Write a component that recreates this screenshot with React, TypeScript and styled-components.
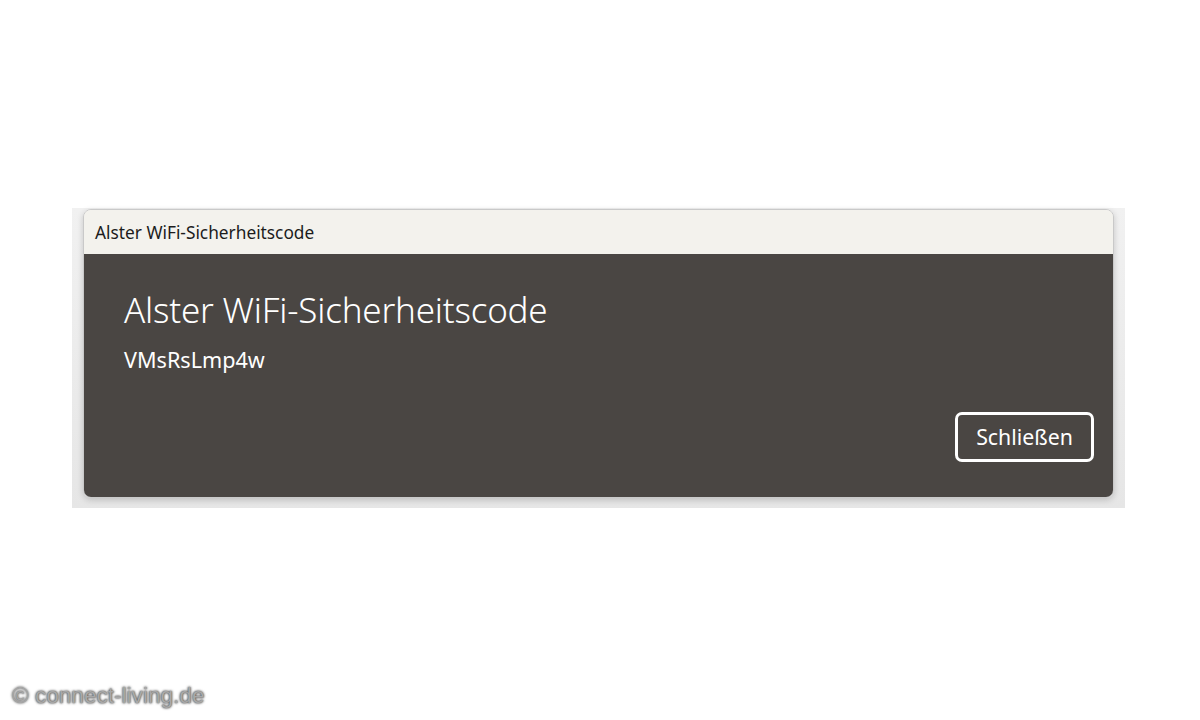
import styled, { createGlobalStyle } from 'styled-components';

const GlobalStyle = createGlobalStyle`
  html, body {
    margin: 0;
    padding: 0;
    background: #ffffff;
    font-family: 'Noto Sans', 'Open Sans', sans-serif;
  }
`;

const Page = styled.div`
  position: relative;
  width: 1200px;
  height: 720px;
  padding-top: 208px;
  padding-left: 72px;
  box-sizing: border-box;
`;

// grauer Rahmen um das Fenster (Screenshot-Schatten)
const Frame = styled.div`
  width: 1053px;
  height: 300px;
  box-sizing: border-box;
  padding: 1px 11px 10px 11px;
  background: linear-gradient(180deg, #f1f1f1 0%, #e6e6e6 100%);
`;

const Window = styled.div`
  height: 100%;
  display: flex;
  flex-direction: column;
  border-radius: 8px;
  overflow: hidden;
  border: 1px solid #c9c9c9;
  box-sizing: border-box;
  box-shadow: 0 2px 6px rgba(0, 0, 0, 0.18);
`;

const TitleBar = styled.div`
  height: 44px;
  flex-shrink: 0;
  display: flex;
  align-items: center;
  padding-left: 11px;
  background: #f3f2ed;
  color: #1c1c1c;
  font-size: 17.3px;
`;

const Body = styled.div`
  flex: 1;
  display: flex;
  flex-direction: column;
  padding: 34px 19px 35px 40px;
  background: #4a4643;
  color: #ffffff;
`;

const Heading = styled.div`
  font-size: 35px;
  font-weight: 300;
  line-height: 44px;
  letter-spacing: -0.2px;
`;

const Code = styled.div`
  margin-top: 14px;
  font-size: 21.6px;
  line-height: 28px;
`;

const Footer = styled.div`
  margin-top: auto;
  display: flex;
  justify-content: flex-end;
`;

const CloseBtn = styled.button`
  width: 139px;
  height: 50px;
  box-sizing: border-box;
  border: 3px solid #ffffff;
  border-radius: 7px;
  background: transparent;
  color: #ffffff;
  font-family: inherit;
  font-size: 21.3px;
  padding: 0 0 2px;
`;

const Watermark = styled.div`
  position: absolute;
  left: 12px;
  top: 683px;
  font-family: 'Liberation Sans', Arial, sans-serif;
  font-size: 22.6px;
  color: #a8a8a8;
  text-shadow: 0 0 2px #444, 0 0 3px #666;
`;

export default function App() {
  return (
    <>
      <GlobalStyle />
      <Page>
        <Frame>
          <Window>
            <TitleBar>Alster WiFi-Sicherheitscode</TitleBar>
            <Body>
              <Heading>Alster WiFi-Sicherheitscode</Heading>
              <Code>VMsRsLmp4w</Code>
              <Footer>
                <CloseBtn>Schließen</CloseBtn>
              </Footer>
            </Body>
          </Window>
        </Frame>
        <Watermark>© connect-living.de</Watermark>
      </Page>
    </>
  );
}
